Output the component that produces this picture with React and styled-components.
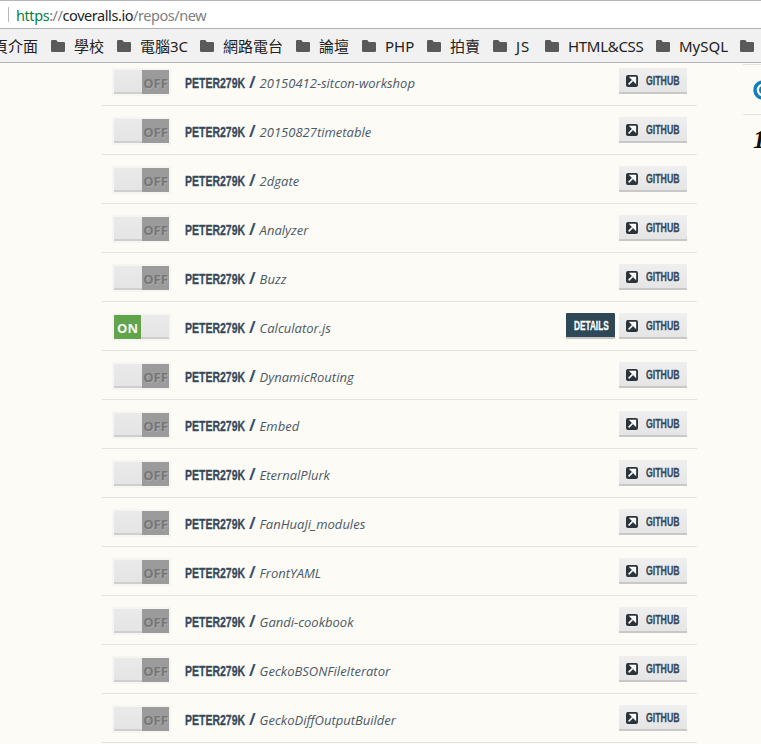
import React from "react";
import styled, { createGlobalStyle } from "styled-components";

const Global = createGlobalStyle`
  html, body { margin: 0; padding: 0; height: 100%; overflow: hidden; background: #fcfbf6; }
  #root { height: 100%; }
`;
const Page = styled.div`
  width: 761px; height: 744px; display: flex; flex-direction: column; overflow: hidden;
  font-family: "Open Sans", sans-serif;
`;
const AddressBar = styled.div`
  height: 27px; flex: none; background: #fff; display: flex; align-items: center;
  border-top: 1px solid #b5b5b5; border-bottom: 1px solid #b0b0b0; padding-left: 8px; gap: 7px;
`;
const Divider = styled.span`width: 1px; height: 15px; background: #b8b8b8;`;
const Url = styled.div`
  font-family: "Noto Sans", sans-serif; font-size: 14.5px; letter-spacing: -0.43px; color: #808080; white-space: nowrap;
`;
const Scheme = styled.span`color: #0b8043;`;
const Sep = styled.span`color: #808080;`;
const Host = styled.span`color: #222;`;
const Bookmarks = styled.div`
  height: 33px; flex: none; background: #f1f1f1; border-bottom: 1px solid #b4b4b4;
  display: flex; align-items: center; gap: 13px; overflow: hidden;
`;
const Mark = styled.div`
  display: flex; align-items: center; gap: 9px; flex: none; color: #222; white-space: nowrap;
  font-family: "Noto Sans", "Noto Sans CJK TC", sans-serif; font-size: 15px;
  &:first-child { margin-left: -7px; }
`;
const MarkLabel = styled.span`
  display: block; width: ${p => p.$w}px; letter-spacing: ${p => p.$ls || 0}px;
`;
const Folder = () => (
  <svg width="14" height="12" viewBox="0 0 14 12"><path fill="#5a5a5a" d="M1.2 0h4.1l1.5 2h6a1.2 1.2 0 0 1 1.2 1.2v7.6A1.2 1.2 0 0 1 12.8 12H1.2A1.2 1.2 0 0 1 0 10.8V1.2A1.2 1.2 0 0 1 1.2 0z"/></svg>
);
const Body = styled.div`
  flex: 1; min-height: 0; overflow: hidden; position: relative; display: flex; align-items: flex-start;
`;
const List = styled.div`
  width: 595px; margin-left: 102px; margin-top: -6px; flex: none;
`;
const Row = styled.div`
  height: 48px; border-bottom: 1px solid #e4e3df; display: flex; align-items: center; padding: 0 10px;
`;
const Toggle = styled.div`
  width: 55px; height: 24px; flex: none; border: 2px solid #f6f5f1; display: flex; background: #e8e8e8; margin-top: 2px;
`;
const Knob = styled.div`flex: 1; background: linear-gradient(#eaeaea, #e4e4e4); box-shadow: inset 0 -2px 0 #cfcfcf;`;
const State = styled.div`
  width: 27px; flex: none; display: flex; align-items: center; justify-content: center;
  font-family: "Open Sans", sans-serif; font-weight: 700; font-size: 13px; padding-top: 1px; box-sizing: border-box;
  background: ${p => (p.$on ? "#62a44c" : "#9b9b9b")};
  color: ${p => (p.$on ? "#f4f4f4" : "#777")};
  text-shadow: ${p => (p.$on ? "none" : "1px 1px 0 #aaa")};
`;
const Name = styled.div`
  margin-left: 14px; margin-top: 2px; flex: 1; display: flex; align-items: baseline; min-width: 0; white-space: nowrap;
`;
const Condensed = styled.span`
  display: inline-block; font-family: "Liberation Sans", sans-serif; font-weight: 700; transform-origin: left center;
  width: ${p => p.$w}px; transform: scaleX(${p => p.$s}); -webkit-text-stroke: 0.3px currentColor;
`;
const Owner = styled(Condensed)`
  font-size: 15px; color: #36495a;
`;
const Slash = styled.span`
  font-family: "Open Sans", sans-serif; font-weight: 700; font-size: 16px; margin: 0 4px 0 4px; color: #36506a;
`;
const Repo = styled.span`
  font-family: "Open Sans", sans-serif; font-style: italic; font-size: 13px; color: #4b5965;
`;
const Btn = styled.div`
  height: 23px; padding-top: 1px; display: flex; align-items: center; flex: none; font-size: 12.5px;
`;
const Details = styled(Btn)`
  width: 41px; padding-left: 8px; background: #2f4858; border-bottom: 2px solid #c6c5c1; border-radius: 1px; margin-right: 4px;
`;
const DetailsLabel = styled(Condensed)`color: #fff; font-size: 12.5px;`;
const Github = styled(Btn)`
  width: 61px; padding-left: 7px; background: linear-gradient(#efefef, #e5e5e5); border-bottom: 2px solid #c8c8c8; gap: 8px;
`;
const GithubLabel = styled(Condensed)`color: #36495a; font-size: 12.5px;`;
const Ext = () => (
  <svg width="12" height="12" viewBox="0 0 12 12"><rect width="12" height="12" rx="2" fill="#2b343b"/><path d="M2.6 9.4 6.4 5.6M4.6 2.6h4.8v4.8z" stroke="#fff" strokeWidth="1.5" fill="#fff"/></svg>
);
const Side = styled.div`
  position: absolute; left: 743px; top: 1px; width: 18px; height: 120px;
`;
const SideCell = styled.div`
  border-top: 1px solid #e4e3df; height: 50px; box-sizing: border-box; overflow: hidden; padding-left: 10px;
`;
const One = styled.div`
  font-family: "Liberation Serif", serif; font-style: italic; font-weight: 700; font-size: 25px; line-height: 28px; margin-top: 11px; color: #111;
`;
const RingIcon = styled.svg`display: block; margin-top: 15px;`;
const Ring = () => (
  <RingIcon width="20" height="20" viewBox="0 0 20 20">
    <circle cx="10" cy="10" r="8" fill="none" stroke="#0f7fc0" strokeWidth="3.5"/>
    <circle cx="10" cy="10" r="3" fill="none" stroke="#0f7fc0" strokeWidth="2"/>
  </RingIcon>
);

const marks = [
  { t: "頁介面", w: 45 },
  { t: "學校", w: 30 },
  { t: "電腦3C", w: 47 },
  { t: "網路電台", w: 60 },
  { t: "論壇", w: 30 },
  { t: "PHP", w: 29 },
  { t: "拍賣", w: 30 },
  { t: "JS", w: 16, ls: 1 },
  { t: "HTML&CSS", w: 75, ls: -0.3 },
  { t: "MySQL", w: 48 },
  { t: "", w: 0 },
];
const repos = ["20150412-sitcon-workshop","20150827timetable","2dgate","Analyzer","Buzz","Calculator.js","DynamicRouting","Embed","EternalPlurk","FanHuaJi_modules","FrontYAML","Gandi-cookbook","GeckoBSONFileIterator","GeckoDiffOutputBuilder"];

export default function App() {
  return (
    <Page>
      <Global />
      <AddressBar>
        <Divider />
        <Url><Scheme>https</Scheme><Sep>://</Sep><Host>coveralls.io</Host>/repos/new</Url>
      </AddressBar>
      <Bookmarks>
        {marks.map((m, i) => (
          <Mark key={i}>{i > 0 && <Folder />}<MarkLabel $w={m.w} $ls={m.ls}>{m.t}</MarkLabel></Mark>
        ))}
      </Bookmarks>
      <Body>
        <List>
          {repos.map(r => {
            const on = r === "Calculator.js";
            return (
              <Row key={r}>
                <Toggle>
                  {on && <State $on>ON</State>}
                  <Knob />
                  {!on && <State>OFF</State>}
                </Toggle>
                <Name><Owner $w={60} $s={0.7}>PETER279K</Owner><Slash>/</Slash><Repo>{r}</Repo></Name>
                {on && <Details><DetailsLabel $w={33} $s={0.66}>DETAILS</DetailsLabel></Details>}
                <Github><Ext /><GithubLabel $w={33} $s={0.7}>GITHUB</GithubLabel></Github>
              </Row>
            );
          })}
        </List>
        <Side>
          <SideCell><Ring /></SideCell>
          <SideCell><One>1</One></SideCell>
        </Side>
      </Body>
    </Page>
  );
}
